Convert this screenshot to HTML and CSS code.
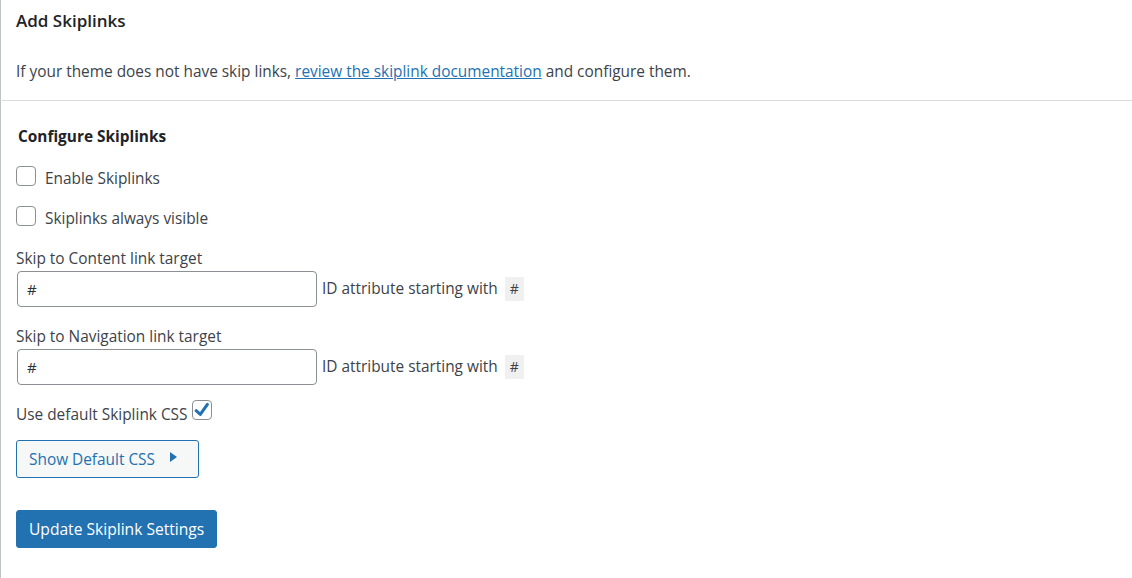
FILE: index.html
```html
<!DOCTYPE html>
<html lang="en">
<link rel="stylesheet" href="styles.css">

<head>
    <meta charset="UTF-8" />
    <title>Add Skiplinks</title>
</head>

<body>
    <div class="panel">
        <div class="intro">
            <h2 class="title">Add Skiplinks</h2>
            <p class="desc">If your theme does not have skip links, <a href="#">review the skiplink documentation</a> and configure them.</p>
        </div>
        <hr class="divider" />
        <div class="settings">
            <h3 class="subtitle">Configure Skiplinks</h3>
            <label class="check-row"><span class="checkbox"></span> Enable Skiplinks</label>
            <label class="check-row"><span class="checkbox"></span> Skiplinks always visible</label>

            <div class="field">
                <label class="field-label">Skip to Content link target</label>
                <div class="field-row">
                    <input type="text" class="text-input" value="#" />
                    <span class="hint">ID attribute starting with <code>#</code></span>
                </div>
            </div>

            <div class="field">
                <label class="field-label">Skip to Navigation link target</label>
                <div class="field-row">
                    <input type="text" class="text-input" value="#" />
                    <span class="hint">ID attribute starting with <code>#</code></span>
                </div>
            </div>

            <label class="inline-check">Use default Skiplink CSS
                <span class="checkbox checked">
                    <svg viewBox="0 0 20 20" width="19" height="19"><path d="M3.5 10.2l4.6 4.2L16 3.2" fill="none" stroke="#2271b1" stroke-width="3.4" stroke-linecap="round" stroke-linejoin="round"/></svg>
                </span>
            </label>

            <div class="toggle-wrap">
                <button class="btn-secondary">Show Default CSS <span class="arrow"></span></button>
            </div>

            <div class="submit-wrap">
                <button class="btn-primary">Update Skiplink Settings</button>
            </div>
        </div>
    </div>
</body>

</html>
```

FILE: styles.css
```css
* {
    margin: 0;
    padding: 0;
    box-sizing: border-box;
}

body {
    font-family: "Open Sans", "Noto Sans", sans-serif;
    font-size: 15.4px;
    color: #3c434a;
    background: #fff;
}

.panel {
    border-left: 1px solid #c3c4c7;
    min-height: 100vh;
}

.intro {
    padding: 0 15px;
}

.title {
    font-size: 17px;
    font-weight: 600;
    color: #1d2327;
    line-height: 22px;
    padding-top: 10px;
}

.desc {
    margin-top: 29px;
    line-height: 22px;
}

.desc a {
    color: #2271b1;
    text-decoration: underline;
}

.divider {
    border: 0;
    border-top: 1px solid #dcdcde;
    margin: 17px 0 0 1px;
}

.settings {
    padding: 0 15px;
}

.subtitle {
    font-size: 15.4px;
    font-weight: 700;
    color: #1d2327;
    line-height: 20px;
    margin: 26px 0 0 2px;
}

.check-row {
    display: flex;
    align-items: center;
    gap: 9px;
    line-height: 20px;
    margin-top: 22px;
}

.check-row + .check-row {
    margin-top: 20px;
}

.checkbox {
    display: inline-flex;
    align-items: center;
    justify-content: center;
    width: 20px;
    height: 20px;
    border: 1px solid #8c8f94;
    border-radius: 4px;
    background: #fff;
    margin-top: -6px;
}

.field {
    margin-top: 20px;
}

.field-label {
    display: block;
    line-height: 20px;
}

.field-row {
    display: flex;
    align-items: center;
    gap: 5px;
    margin-top: 2px;
}

.text-input {
    width: 300px;
    height: 36px;
    margin-left: 1px;
    border: 1px solid #8c8f94;
    border-radius: 4px;
    padding: 0 9px;
    font-family: inherit;
    font-size: 15px;
    color: #2c3338;
}

.hint code {
    display: inline-block;
    font-family: "Open Sans", sans-serif;
    font-size: 14px;
    color: #3c434a;
    background: #f0f0f1;
    padding: 2px 5px 2px;
    margin-left: 3px;
    line-height: 20px;
}

.inline-check {
    display: flex;
    align-items: center;
    gap: 5px;
    margin-top: 20px;
    line-height: 20px;
}

.inline-check .checkbox {
    margin-top: -10px;
}

.toggle-wrap {
    margin-top: 15px;
}

.btn-secondary {
    height: 38px;
    width: 183px;
    padding: 0 12px;
    background: #f6f7f7;
    border: 1px solid #2271b1;
    border-radius: 3px;
    color: #2271b1;
    font-family: inherit;
    font-size: 15.4px;
    display: inline-flex;
    align-items: center;
    gap: 15px;
}

.arrow {
    display: inline-block;
    width: 0;
    height: 0;
    border-top: 5px solid transparent;
    border-bottom: 5px solid transparent;
    border-left: 7px solid #2271b1;
    margin-top: -4px;
}

.submit-wrap {
    margin-top: 32px;
}

.btn-primary {
    height: 38px;
    padding: 0 12px;
    background: #2271b1;
    border: 1px solid #2271b1;
    border-radius: 3px;
    color: #fff;
    font-family: inherit;
    font-size: 15.6px;
}
```
